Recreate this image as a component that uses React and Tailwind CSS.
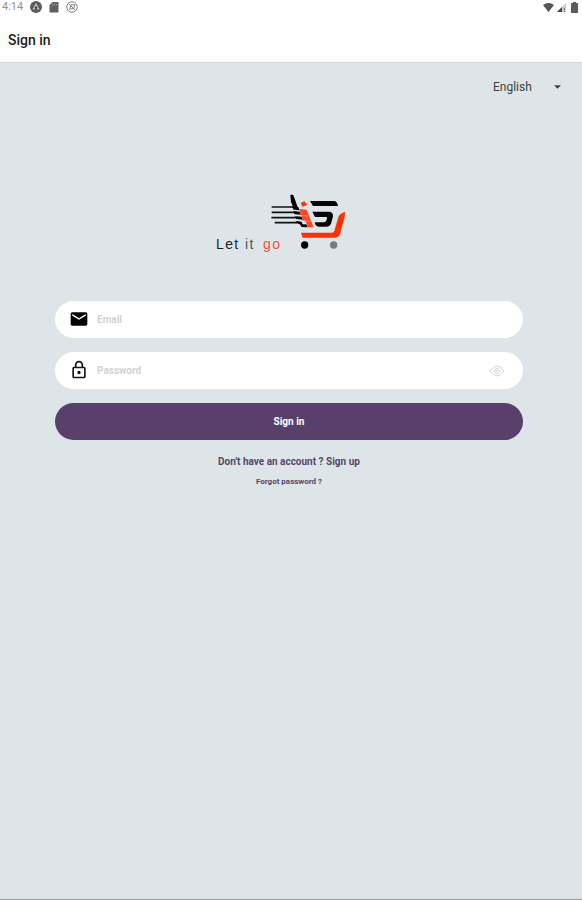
import React, { useState } from "react";

function StatusBar() {
  return (
    <div className="flex h-[14px] items-center justify-between px-[2px] text-[11px] leading-[14px] text-[#929292]">
      <div className="flex items-center gap-[7px]">
        <span>4:14</span>
        <svg className="size-3" viewBox="0 0 24 24" aria-hidden="true">
          <circle cx="12" cy="12" r="12" fill="#5c5c5c" />
          <path d="M12 4l7 13h-4l-3-6-3 6H5z" fill="#c8c8c8" />
          <circle cx="12" cy="13" r="2.5" fill="#444" />
        </svg>
        <svg className="h-3 w-[10px]" viewBox="0 0 20 24" aria-hidden="true">
          <path d="M7 2h11a1 1 0 0 1 1 1v19a1 1 0 0 1-1 1H2a1 1 0 0 1-1-1V8z" fill="#606060" />
          <path d="M7 5v4M11 5v4M15 5v4" stroke="#999" strokeWidth="2" />
        </svg>
        <svg className="size-3" viewBox="0 0 24 24" fill="none" stroke="#858585" strokeWidth="2" aria-hidden="true">
          <circle cx="12" cy="12" r="10.5" />
          <path d="M5 5l14 14M7 18l3-11 7 1-1 7-7 1M16 9l3-3" />
        </svg>
      </div>
      <div className="flex items-center gap-[3px]">
        <svg className="h-[9px] w-[11px]" viewBox="0 0 22 18" aria-hidden="true">
          <path d="M0 4Q11-4 22 4L11 18z" fill="#555" />
        </svg>
        <svg className="size-[9px]" viewBox="0 0 18 18" aria-hidden="true">
          <path d="M18 0v18H0z" fill="#ccc" />
          <path d="M10 8v10H0z" fill="#444" />
          <path d="M15 11v3M15 16v2" stroke="#555" strokeWidth="2" />
        </svg>
        <svg className="mx-[2px] h-[11px] w-[7px]" viewBox="0 0 14 22" aria-hidden="true">
          <path d="M4 0h6v2h3a1 1 0 0 1 1 1v18a1 1 0 0 1-1 1H1a1 1 0 0 1-1-1V3a1 1 0 0 1 1-1h3z" fill="#5c5c5c" />
        </svg>
      </div>
    </div>
  );
}

function Logo() {
  return (
    <svg className="h-[64px] w-[135px]" viewBox="0 0 135 64" role="img" aria-label="Let it go">
      <text x="0" y="59" className="font-['Liberation_Sans',Arial,sans-serif] text-[14px] tracking-widest" fill="#1c1f20">
        Let <tspan fill="#50585a">it</tspan>
      </text>
      <text x="47" y="59" className="font-['Liberation_Sans',Arial,sans-serif] text-[14px] tracking-widest" fill="#f0503a">
        go
      </text>
      <g transform="translate(49 0) scale(0.33333)">
        <g fill="none" stroke="#111" strokeWidth="5" strokeLinecap="round">
          <path d="M22 51h62M22 67h72M21 83h82M31 98h72" />
        </g>
        <path d="M76 16q5-5 9 0l12 32 2 9-12-1-9-20z" fill="#050505" />
        <path d="M80 48l20 3 4 10-18-2zM84 64l22 1 3 9-20-1zM90 79l20 1 4 9-20-2zM92 93l18 2 3 9-12-2zM104 103l20 0 4 9-18-1z" fill="#050505" />
        <path d="M107 39l11-5 9 11-15 5z" fill="#ff3310" />
        <path d="M105 57l20 2 21 53h-17l-7-17-8-3-5-17-5-3z" fill="#ff452a" />
        <path d="M107 76l21 2M115 92l22 2" stroke="#f0bfb7" strokeWidth="2" />
        <path d="M135 33h74q9 4 10 15h-75z" fill="#050505" />
        <path d="M142 65h53q10 3 9 14l-6 22q-4 9-14 9h-24q-9-2-11-13h28q7-1 8-8l1-8h-36z" fill="#050505" />
        <path d="M240 65l-13 7q-6 4-8 12l-11 39q-2 5-8 5h-92l5 15h99q10-1 13-11l14-51z" fill="#ff3000" />
        <circle cx="119" cy="165" r="11" fill="#050505" />
        <circle cx="206" cy="165" r="11" fill="#777b7b" />
      </g>
    </svg>
  );
}

function MailIcon() {
  return (
    <svg className="size-5" viewBox="0 0 24 24" fill="#050505" role="img" aria-label="Email">
      <path d="M20 4H4c-1.100 0-2 .9-2 2v12c0 1.100.9 2 2 2h16c1.100 0 2-.9 2-2V6c0-1.100-.9-2-2-2zm0 4l-8 5-8-5V6l8 5 8-5z" />
    </svg>
  );
}

function LockIcon() {
  return (
    <svg className="size-5" viewBox="0 0 24 24" fill="#151515" role="img" aria-label="Password">
      <path d="M18 8h-1V6A5 5 0 0 0 7 6v2H6a2 2 0 0 0-2 2v10a2 2 0 0 0 2 2h12a2 2 0 0 0 2-2V10a2 2 0 0 0-2-2zM9 6a3 3 0 0 1 6 0v2H9zm9 14H6V10h12z" fillRule="evenodd" />
      <circle cx="12" cy="15" r="2" />
    </svg>
  );
}

function Field({ id, label, type, icon, children }) {
  return (
    <div className="flex h-[37px] items-center rounded-full bg-white pl-[14px] pr-[18px]">
      <label htmlFor={id} className="pb-[2px]">{icon}</label>
      <input
        id={id}
        type={type}
        placeholder={label}
        className="ml-2 h-full min-w-0 flex-1 bg-transparent text-[10px] font-bold leading-4 text-[#333] outline-none placeholder:text-[#d2d2d2]"
      />
      {children}
    </div>
  );
}

export default function App() {
  const [visible, setVisible] = useState(false);
  return (
    <div className="flex min-h-screen flex-col border-b border-[#9b9ba8] bg-[#dde5e8] font-[Roboto,'Liberation_Sans',sans-serif]">
      <header className="border-b border-[#d3dadd] bg-white">
        <StatusBar />
        <h1 className="px-2 pb-[10px] pt-[14px] text-[14px] font-medium leading-6 text-[#1c1c1c]">Sign in</h1>
      </header>
      <div className="flex justify-end pr-[21px] pt-[14px]">
        <div className="flex items-center text-[#3d4143]">
          <select aria-label="Language" className="w-[61px] appearance-none bg-transparent text-[12px] leading-5 outline-none">
            <option>English</option>
          </select>
          <svg className="pointer-events-none h-1 w-[7px]" viewBox="0 0 8 4" fill="currentColor" aria-hidden="true">
            <path d="M0 0h8L4 4z" />
          </svg>
        </div>
      </div>
      <main className="flex flex-col pl-[55px] pr-[59px] pt-[93px]">
        <div className="flex justify-center pr-[11px]">
          <Logo />
        </div>
        <form className="mt-[47px] flex flex-col gap-[14px]" onSubmit={(e) => e.preventDefault()}>
          <Field id="email" label="Email" type="email" icon={<MailIcon />} />
          <Field id="password" label="Password" type={visible ? "text" : "password"} icon={<LockIcon />}>
            <button type="button" aria-label="Show password" onClick={() => setVisible(!visible)}>
              <svg className="h-3 w-4" viewBox="0 0 32 24" fill="none" stroke="#d4d4d4" strokeWidth="2" aria-hidden="true">
                <path d="M2 12Q9 2 16 2t14 10q-7 10-14 10T2 12z" />
                <circle cx="16" cy="12" r="5" />
                <circle cx="16" cy="12" r="1" />
              </svg>
            </button>
          </Field>
          <button type="submit" className="h-[37px] rounded-full bg-[#593f6b] text-[10px] font-bold leading-4 text-white">
            Sign in
          </button>
        </form>
        <div className="mt-[14px] flex flex-col items-center gap-1 text-[#56456a]">
          <a href="#signup" className="text-[10px] font-bold leading-4">Don't have an account ? Sign up</a>
          <a href="#forgot" className="text-[8px] font-bold leading-4">Forgot password ?</a>
        </div>
      </main>
    </div>
  );
}
